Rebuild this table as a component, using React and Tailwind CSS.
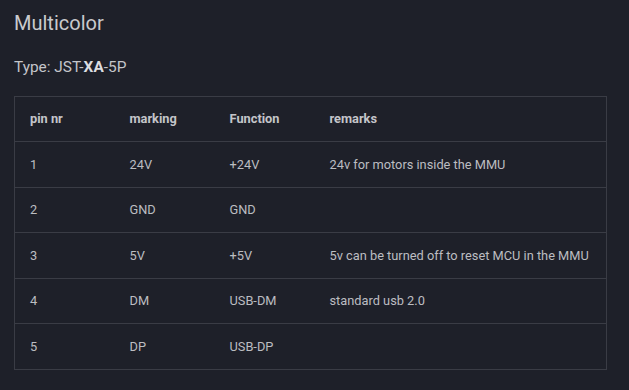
import React from 'react';

const rows = [
    ['1', '24V', '+24V', '24v for motors inside the MMU'],
    ['2', 'GND', 'GND', ''],
    ['3', '5V', '+5V', '5v can be turned off to reset MCU in the MMU'],
    ['4', 'DM', 'USB-DM', 'standard usb 2.0'],
    ['5', 'DP', 'USB-DP', ''],
];

const App = () => {
    return (
        <div className="min-h-screen w-[629px] h-[390px] bg-[#1e2029] text-[#c4c5c9] px-[14px] pt-[11px] font-['Roboto',sans-serif] overflow-hidden">
            <h2 className="text-[20px] leading-[24px] text-[#c9cacd]">Multicolor</h2>
            <p className="mt-[22px] text-[15.4px] leading-[20px] text-[#c4c5c9]">
                Type: JST-<strong className="font-bold text-[#dcdde0]">XA</strong>-5P
            </p>

            <table className="mt-[19px] w-[593px] border-collapse border border-[#3a3c45] text-[12.8px] table-fixed">
                <colgroup>
                    <col className="w-[100px]" />
                    <col className="w-[100px]" />
                    <col className="w-[100px]" />
                    <col />
                </colgroup>
                <thead>
                    <tr className="h-[45px]">
                        <th className="text-left font-bold px-[15px] text-[#c4c5c9]">pin nr</th>
                        <th className="text-left font-bold px-[15px] text-[#c4c5c9]">marking</th>
                        <th className="text-left font-bold px-[15px] text-[#c4c5c9]">Function</th>
                        <th className="text-left font-bold px-[15px] text-[#c4c5c9]">remarks</th>
                    </tr>
                </thead>
                <tbody>
                    {rows.map((r) => (
                        <tr key={r[0]} className="h-[45.5px] border-t border-[#3a3c45]">
                            {r.map((c, i) => (
                                <td key={i} className="px-[15px] text-[#bcbdc1] whitespace-nowrap">{c}</td>
                            ))}
                        </tr>
                    ))}
                </tbody>
            </table>
        </div>
    );
};

export default App;
